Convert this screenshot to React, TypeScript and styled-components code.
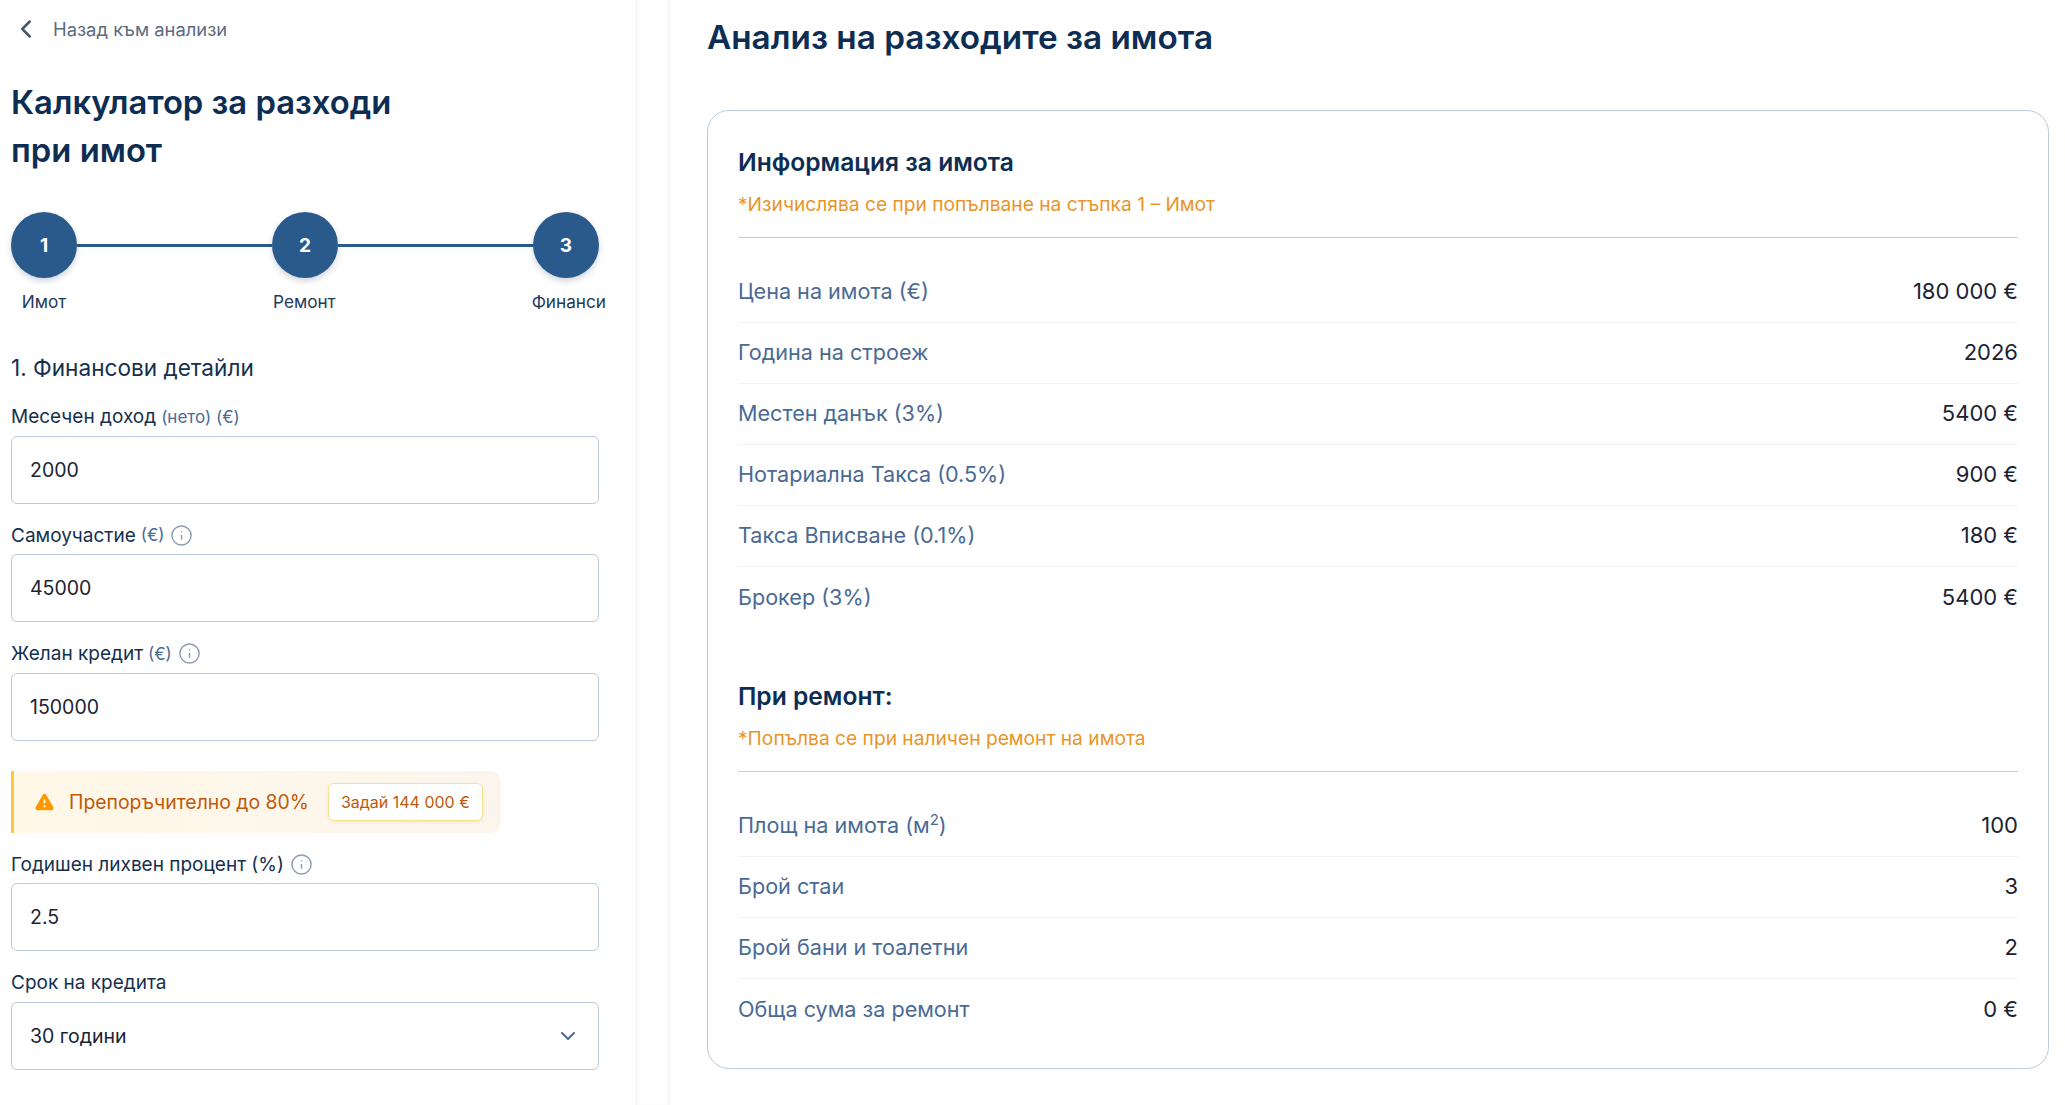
import React from "react";
import styled, { createGlobalStyle } from "styled-components";
import { ChevronLeft, ChevronDown, Info } from "lucide-react";

const GlobalStyle = createGlobalStyle`
  html, body {
    margin: 0;
    padding: 0;
    background: #fff;
  }
  body {
    font-family: "Inter", "Noto Sans", sans-serif;
    color: #0f2f50;
  }
  * {
    box-sizing: border-box;
  }
`;

const infoRows = [
  { label: "Цена на имота (€)", value: "180 000 €" },
  { label: "Година на строеж", value: "2026" },
  { label: "Местен данък (3%)", value: "5400 €" },
  { label: "Нотариална Такса (0.5%)", value: "900 €" },
  { label: "Такса Вписване (0.1%)", value: "180 €" },
  { label: "Брокер (3%)", value: "5400 €" },
];

const repairRows = [
  {
    label: (
      <>
        Площ на имота (м<sup>2</sup>)
      </>
    ),
    value: "100",
  },
  { label: "Брой стаи", value: "3" },
  { label: "Брой бани и тоалетни", value: "2" },
  { label: "Обща сума за ремонт", value: "0 €" },
];

const steps = ["Имот", "Ремонт", "Финанси"];

const Field = ({
  label,
  unit,
  hint,
  value,
}: {
  label: string;
  unit?: string;
  hint?: boolean;
  value: string;
}) => (
  <FieldWrap>
    <FieldLabel>
      {label}
      {unit && <Unit>{unit}</Unit>}
      {hint && <HintIcon size={23} strokeWidth={1.5} />}
    </FieldLabel>
    <InputBox>{value}</InputBox>
  </FieldWrap>
);

const App = () => {
  return (
    <Page lang="bg">
      <GlobalStyle />
      <Sidebar>
        <BackLink>
          <ChevronLeft size={30} strokeWidth={2} />
          <span>Назад към анализи</span>
        </BackLink>
        <Title>
          Калкулатор за разходи
          <br />
          при имот
        </Title>
        <Stepper>
          <StepTrack>
            {steps.map((step, i) => (
              <React.Fragment key={step}>
                {i > 0 && <StepLine />}
                <StepCircle>{i + 1}</StepCircle>
              </React.Fragment>
            ))}
          </StepTrack>
          <StepLabels>
            {steps.map((step) => (
              <StepLabel key={step}>{step}</StepLabel>
            ))}
          </StepLabels>
        </Stepper>
        <SectionTitle>1. Финансови детайли</SectionTitle>
        <Field label="Месечен доход" unit="(нето) (€)" value="2000" />
        <Field label="Самоучастие" unit="(€)" hint value="45000" />
        <Field label="Желан кредит" unit="(€)" hint value="150000" />
        <Warning>
          <WarnIcon viewBox="0 0 24 24">
            <path d="M4.47 21h15.06c1.54 0 2.5-1.67 1.73-3L13.73 4.99c-.77-1.33-2.69-1.33-3.46 0L2.74 18c-.77 1.33.19 3 1.73 3zM12 14c-.55 0-1-.45-1-1v-2c0-.55.45-1 1-1s1 .45 1 1v2c0 .55-.45 1-1 1zm1 4h-2v-2h2v2z" />
          </WarnIcon>
          <WarnText>Препоръчително до 80%</WarnText>
          <WarnButton>Задай 144 000 €</WarnButton>
        </Warning>
        <Field label="Годишен лихвен процент (%)" hint value="2.5" />
        <FieldWrap>
          <FieldLabel>Срок на кредита</FieldLabel>
          <InputBox>
            30 години
            <ChevronDown size={24} strokeWidth={2} color="#4a6a94" />
          </InputBox>
        </FieldWrap>
      </Sidebar>
      <Gutter />
      <Main>
        <MainTitle>Анализ на разходите за имота</MainTitle>
        <Card>
          <CardHeading>Информация за имота</CardHeading>
          <CardNote>*Изичислява се при попълване на стъпка 1 – Имот</CardNote>
          <Rows>
            {infoRows.map((row) => (
              <Row key={row.label}>
                <RowLabel>{row.label}</RowLabel>
                <RowValue>{row.value}</RowValue>
              </Row>
            ))}
          </Rows>
          <CardHeading $second>При ремонт:</CardHeading>
          <CardNote>*Попълва се при наличен ремонт на имота</CardNote>
          <Rows>
            {repairRows.map((row, i) => (
              <Row key={i}>
                <RowLabel>{row.label}</RowLabel>
                <RowValue>{row.value}</RowValue>
              </Row>
            ))}
          </Rows>
        </Card>
      </Main>
    </Page>
  );
};

const Page = styled.div`
  display: flex;
  width: 2065px;
  height: 1105px;
  overflow: hidden;
  background: #fff;
`;

const Sidebar = styled.aside`
  width: 635px;
  flex: none;
  padding: 0 36px 0 11px;
`;

const Gutter = styled.div`
  width: 35px;
  flex: none;
  background: #fff;
  box-shadow: inset 5px 0 4px -2px #f6f6f7, inset -4px 0 4px -2px #f4f5f6;
`;

const BackLink = styled.div`
  display: flex;
  align-items: center;
  gap: 12px;
  height: 58px;
  font-size: 18.4px;
  color: #5c6b80;
  svg {
    color: #45556c;
  }
`;

const Title = styled.h1`
  margin: 20px 0 0;
  font-size: 32.8px;
  line-height: 48px;
  font-weight: 600;
  color: #0d2d52;
`;

const Stepper = styled.div`
  margin-top: 38px;
`;

const StepTrack = styled.div`
  display: flex;
  align-items: center;
`;

const StepCircle = styled.div`
  width: 66px;
  height: 66px;
  flex: none;
  display: flex;
  align-items: center;
  justify-content: center;
  border-radius: 50%;
  background: #2a5a8c;
  color: #fff;
  font-size: 19px;
  font-weight: 700;
  box-shadow: 0 3px 6px rgba(15, 47, 80, 0.2);
`;

const StepLine = styled.div`
  flex: 1;
  height: 3px;
  background: #2a5a8c;
`;

const StepLabels = styled.div`
  display: flex;
  justify-content: space-between;
  margin-top: 12px;
`;

const StepLabel = styled.span`
  font-size: 17.2px;
  line-height: 24px;
  color: #1f3a5a;
  &:first-child {
    width: 66px;
    text-align: center;
  }
  &:last-child {
    margin-right: -7px;
  }
`;

const SectionTitle = styled.h2`
  margin: 39px 0 21.5px;
  font-size: 22.6px;
  line-height: 30px;
  font-weight: 400;
  color: #14304f;
`;

const FieldWrap = styled.div`
  margin-top: 19.5px;
`;

const FieldLabel = styled.div`
  display: flex;
  align-items: center;
  gap: 5px;
  height: 24px;
  margin-bottom: 7px;
  font-size: 19px;
  color: #14304f;
`;

const Unit = styled.span`
  font-size: 17px;
  color: #4a6a94;
`;

const HintIcon = styled(Info)`
  color: #8f9bb0;
  margin-left: 1px;
`;

const InputBox = styled.div`
  display: flex;
  align-items: center;
  justify-content: space-between;
  height: 68px;
  padding: 0 18px;
  background: #fff;
  border: 1px solid #bccadb;
  border-radius: 6px;
  font-size: 19.5px;
  color: #1a2333;
`;

const Warning = styled.div`
  display: inline-flex;
  align-items: center;
  height: 62px;
  margin-top: 30px;
  padding: 0 18px 0 19px;
  background: linear-gradient(90deg, #fff8e7, #fcf5ee);
  border-left: 3px solid #ffca3a;
  border-radius: 0 10px 10px 0;
`;

const WarnIcon = styled.svg`
  width: 23px;
  height: 23px;
  fill: #ff9800;
`;

const WarnText = styled.span`
  margin-left: 13px;
  font-size: 19.4px;
  color: #bf5a0a;
`;

const WarnButton = styled.span`
  display: flex;
  align-items: center;
  height: 38px;
  margin-left: 19px;
  padding: 0 12px;
  background: #fff;
  border: 1px solid #fbe08e;
  border-radius: 6px;
  box-shadow: 0 1px 3px rgba(191, 90, 10, 0.12);
  font-size: 16px;
  color: #bf5a0a;
`;

const Main = styled.main`
  flex: 1;
  min-width: 0;
  padding: 0 16px 0 37px;
`;

const MainTitle = styled.h1`
  margin: 0;
  height: 110px;
  padding-top: 16px;
  font-size: 33.3px;
  line-height: 42px;
  font-weight: 600;
  color: #0d2d52;
`;

const Card = styled.section`
  height: 959px;
  padding: 32px 30px 0;
  border: 1px solid #bccadb;
  border-radius: 22px;
`;

const CardHeading = styled.h3<{ $second?: boolean }>`
  margin: ${(p) => (p.$second ? "49px" : "0")} 0 0;
  font-size: 24.6px;
  line-height: 38px;
  font-weight: 600;
  color: #0d2d52;
`;

const CardNote = styled.p`
  margin: 9px 0 0;
  padding-bottom: 19px;
  font-size: 19.2px;
  line-height: 28px;
  color: #e8952a;
  border-bottom: 1px solid #c3cede;
`;

const Rows = styled.div`
  padding-top: 24px;
`;

const Row = styled.div`
  display: flex;
  align-items: center;
  justify-content: space-between;
  height: 61px;
  padding-bottom: 2px;
  border-bottom: 1px solid #f1f2f4;
  &:last-child {
    border-bottom: 0;
  }
`;

const RowLabel = styled.span`
  font-size: 21.6px;
  color: #4a6a94;
  sup {
    font-size: 15px;
    line-height: 0;
  }
`;

const RowValue = styled.span`
  font-size: 22px;
  color: #1a2333;
`;

export default App;
